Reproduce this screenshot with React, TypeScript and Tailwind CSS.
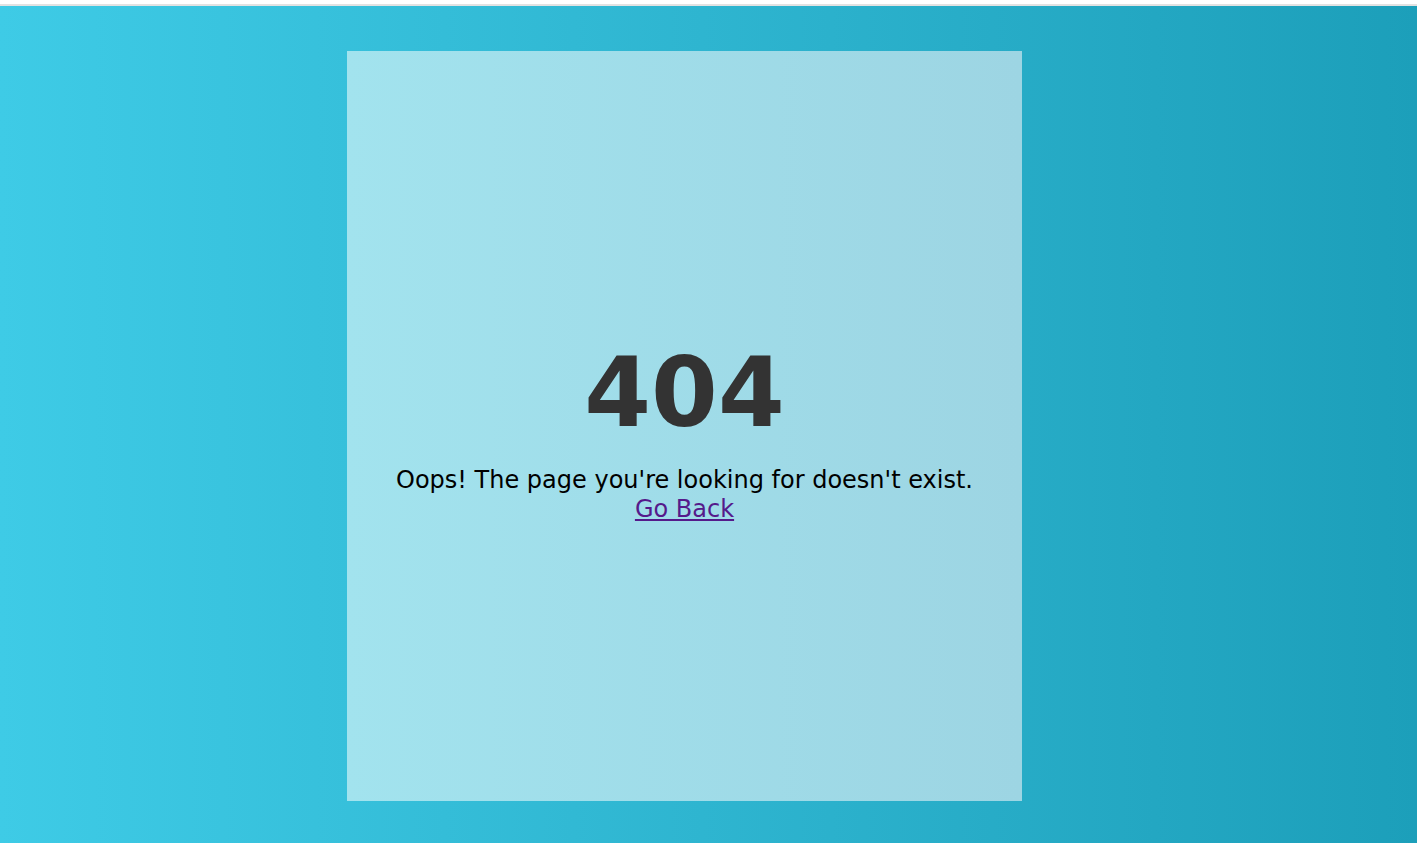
import React from 'react';

export default function App() {
  return (
    <div className="min-h-screen bg-white pt-[4px] font-['DejaVu_Sans',sans-serif]">
      <div className="border-t-2 border-[#e2e2e2] bg-gradient-to-r from-[#3ecbe6] to-[#1c9fba] pt-[45px] h-[839px]">
        <div className="ml-[347px] w-[675px] h-[750px] pt-[8px] bg-gradient-to-r from-[#a2e3ee] to-[#9dd5e3] flex flex-col items-center justify-center text-center">
          <h1 className="text-[96px] leading-[1.2] font-bold text-[#333333]">404</h1>
          <p className="mt-[14px] text-[24px] leading-[29px] text-black">
            Oops! The page you're looking for doesn't exist.
            <br />
            <a href="#" className="text-[#551a8b] underline">Go Back</a>
          </p>
        </div>
      </div>
    </div>
  );
}
